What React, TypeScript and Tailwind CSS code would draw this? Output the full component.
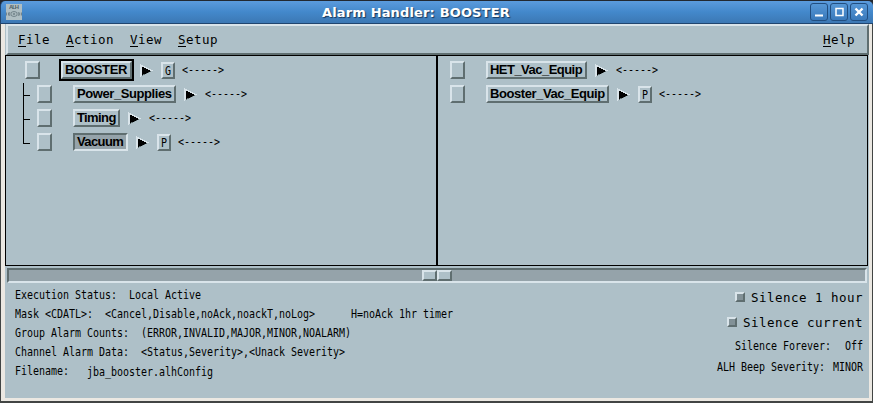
import type { ReactNode } from "react";

const raised = "border-2 border-t-[#d9e4ea] border-l-[#d9e4ea] border-r-[#5f6e70] border-b-[#5f6e70]";
const sunken = "border-2 border-t-[#5f6e70] border-l-[#5f6e70] border-r-[#d9e4ea] border-b-[#d9e4ea]";
const smallMono =
  "block whitespace-pre font-['DejaVu_Sans_Mono',monospace] text-[10px] leading-[12px] tracking-[-0.02px] scale-y-[1.22]";
const largeMono = "whitespace-pre font-['DejaVu_Sans_Mono',monospace] text-[12.5px] leading-[15px] tracking-[0.475px]";

function Arrow() {
  return (
    <svg className="ml-2 mt-[3px] h-[13px] w-[13px] shrink-0" viewBox="0 0 13 13" shapeRendering="crispEdges">
      <path d="M0 0L13 6.5L0 13Z" fill="#d9e4ea" />
      <path d="M0 13L13 6.5H2V11Z" fill="#5f6e70" />
      <path d="M2 2.5L11.5 7L2 11Z" fill="#000" />
    </svg>
  );
}

type RowProps = { name: string; width: string; gap: string; tracking: string; tag?: string; active?: boolean; root?: boolean };

function TreeRow({ name, width, gap, tracking, tag, active, root }: RowProps) {
  return (
    <div className="flex h-6 items-start">
      <div className={`h-[18px] w-[15px] shrink-0 ${raised}`} />
      <div
        className={`${gap} ${width} ${tracking} h-[18px] shrink-0 overflow-visible pl-[2px] font-['Liberation_Sans',sans-serif] text-[13px] leading-[14px] font-bold whitespace-nowrap ${
          active ? `bg-[#95a3aa] ${sunken}` : raised
        } ${root ? "outline-2 outline-black" : ""}`}
      >
        {name}
      </div>
      <Arrow />
      {tag && (
        <div className={`ml-2 mt-px flex h-[17px] w-[14px] shrink-0 items-center justify-center ${raised}`}>
          <span className={smallMono}>{tag}</span>
        </div>
      )}
      <span className={`${smallMono} mt-[3px] ${tag ? "ml-[7px]" : "ml-[8px]"}`}>{"<----->"}</span>
    </div>
  );
}

function MenuItem({ first, rest }: { first: string; rest: string }) {
  return (
    <span className={largeMono}>
      <span className="inline-block h-[15px] border-b border-black">{first}</span>
      {rest}
    </span>
  );
}

function TitleButton({ children }: { children: ReactNode }) {
  return (
    <div className="h-[18px] w-[18px] rounded-[3px] border border-[#214e80] bg-linear-to-b from-[#5697d6] to-[#3979bb]">
      <svg className="h-4 w-4" viewBox="0 0 16 16" fill="none" stroke="white" strokeWidth="2">
        {children}
      </svg>
    </div>
  );
}

export default function App() {
  return (
    <div className="flex h-[403px] w-[873px] flex-col overflow-hidden bg-[#222831] text-black">
      <div className="mt-px flex h-[23px] shrink-0 items-start rounded-t-[5px] border-b border-l border-b-[#20456f] border-l-[#20456f] bg-linear-to-b from-[#5b9bdd] via-[#4388cb] to-[#3c78b4] pl-[5px] pr-[5px] pt-[2px]">
        <svg className="mt-px h-4 w-4 shrink-0" viewBox="0 0 16 16">
          <path d="M0 0H16V16H0Z" fill="#afbec3" />
          <text x="3" y="5" fill="#4f5f67" fontSize="5.8" fontWeight="bold" fontFamily="Liberation Sans" textLength="10">ALH</text>
          <g fill="none" stroke="#65767d" strokeWidth=".8">
            <ellipse cx="8" cy="10" rx="3.2" ry="2.5" />
            <circle cx="8" cy="10" r=".8" />
            <path d="M.5 8.5V11.5M2.5 8.5V11.5M4 8L3 10L4 12M12 8L13 10L12 12M13.7 8.5V11.5M15.5 8.5V11.5" />
          </g>
        </svg>
        <h1 className="ml-[300px] flex-1 font-['DejaVu_Sans',sans-serif] text-[13px] leading-[20px] font-bold tracking-[0.15px] whitespace-nowrap text-white [text-shadow:1px_1px_1px_#17365a]">
          Alarm Handler: BOOSTER
        </h1>
        <div className="flex gap-[2px]">
          <TitleButton><path d="M4 11.5H12" /></TitleButton>
          <TitleButton><path d="M5 4.5H12V11.5H5Z" strokeWidth="1.5" /></TitleButton>
          <TitleButton><path d="M4.5 4.5L11.5 11.5M11.5 4.5L4.5 11.5" strokeWidth="2.4" /></TitleButton>
        </div>
      </div>

      <div className="flex min-h-0 flex-1 flex-col border-b-2 border-l border-r border-b-[#424544] border-l-[#424544] border-r-[#424544] bg-[#ebe8e2] pb-[3px] pl-1 pr-[3px]">
        <div className="flex min-h-0 flex-1 flex-col bg-[#aec0c8]">
          <nav className={`ml-px flex h-[31px] shrink-0 items-start justify-between pl-[10px] pr-[12px] pt-[6px] ${raised}`}>
            <div className="flex gap-4">
              <MenuItem first="F" rest="ile" />
              <MenuItem first="A" rest="ction" />
              <MenuItem first="V" rest="iew" />
              <MenuItem first="S" rest="etup" />
            </div>
            <MenuItem first="H" rest="elp" />
          </nav>

          <main className="mr-px flex h-[211px] shrink-0 border border-black">
            <section className="flex w-[430px] shrink-0 border-r-0 pt-[5px]">
              <svg className="ml-[17px] mt-[22px] h-[61px] w-[7px] shrink-0" viewBox="0 0 7 61" shapeRendering="crispEdges">
                <path d="M.5 0V60.5M0 12.5H7M0 36.5H7M0 60.5H7" stroke="black" fill="none" />
              </svg>
              <div className="-ml-[5px]">
                <TreeRow name="BOOSTER" width="w-[71px]" gap="ml-[21px]" tracking="tracking-[-0.3px]" tag="G" root />
                <div className="ml-3">
                  <TreeRow name="Power_Supplies" width="w-[103px]" gap="ml-[21px]" tracking="tracking-[-0.42px]" />
                  <TreeRow name="Timing" width="w-[47px]" gap="ml-[21px]" tracking="tracking-[-0.6px]" />
                  <TreeRow name="Vacuum" width="w-[55px]" gap="ml-[21px]" tracking="tracking-[-0.6px]" tag="P" active />
                </div>
              </div>
            </section>
            <section className="flex-1 border-l-2 border-black pl-[12px] pt-[5px]">
              <TreeRow name="HET_Vac_Equip" width="w-[101px]" gap="ml-[21px]" tracking="tracking-[-0.53px]" />
              <TreeRow name="Booster_Vac_Equip" width="w-[123px]" gap="ml-[21px]" tracking="tracking-[-0.43px]" tag="P" />
            </section>
          </main>

          <div className={`ml-[2px] mr-[2px] mt-[2px] flex h-[15px] shrink-0 bg-[#95a3aa] pl-[413px] ${sunken}`}>
            <div className={`h-[11px] w-[15px] bg-[#aec0c8] ${raised}`} />
            <div className={`h-[11px] w-[15px] bg-[#aec0c8] ${raised}`} />
          </div>

          <footer className="flex min-h-0 flex-1 justify-between pl-[10px] pr-[6px]">
            <div className="flex flex-col gap-[7px] pt-[6px]">
              <span className={smallMono}>{"Execution Status:  Local Active"}</span>
              <span className={smallMono}>{"Mask <CDATL>:  <Cancel,Disable,noAck,noackT,noLog>      H=noAck 1hr timer"}</span>
              <span className={smallMono}>{"Group Alarm Counts:  (ERROR,INVALID,MAJOR,MINOR,NOALARM)"}</span>
              <span className={smallMono}>{"Channel Alarm Data:  <Status,Severity>,<Unack Severity>"}</span>
              <div className="flex gap-[18px]">
                <span className={smallMono}>Filename:</span>
                <span className={`${smallMono} mt-px`}>jba_booster.alhConfig</span>
              </div>
            </div>
            <div className="flex flex-col items-end pt-[7px]">
              <div className="flex h-[25px] items-start gap-[6px]">
                <div className={`mt-[2px] h-[10px] w-[10px] bg-[#829197] ${raised}`} />
                <span className={largeMono}>Silence 1 hour</span>
              </div>
              <div className="flex h-[25px] items-start gap-[6px]">
                <div className={`mt-[2px] h-[10px] w-[10px] bg-[#829197] ${raised}`} />
                <span className={largeMono}>Silence current</span>
              </div>
              <div className="flex gap-[14px]">
                <span className={smallMono}>Silence Forever:</span>
                <span className={smallMono}>Off</span>
              </div>
              <div className="mt-[9px] flex gap-2">
                <span className={smallMono}>ALH Beep Severity:</span>
                <span className={smallMono}>MINOR</span>
              </div>
            </div>
          </footer>
        </div>
      </div>
    </div>
  );
}
